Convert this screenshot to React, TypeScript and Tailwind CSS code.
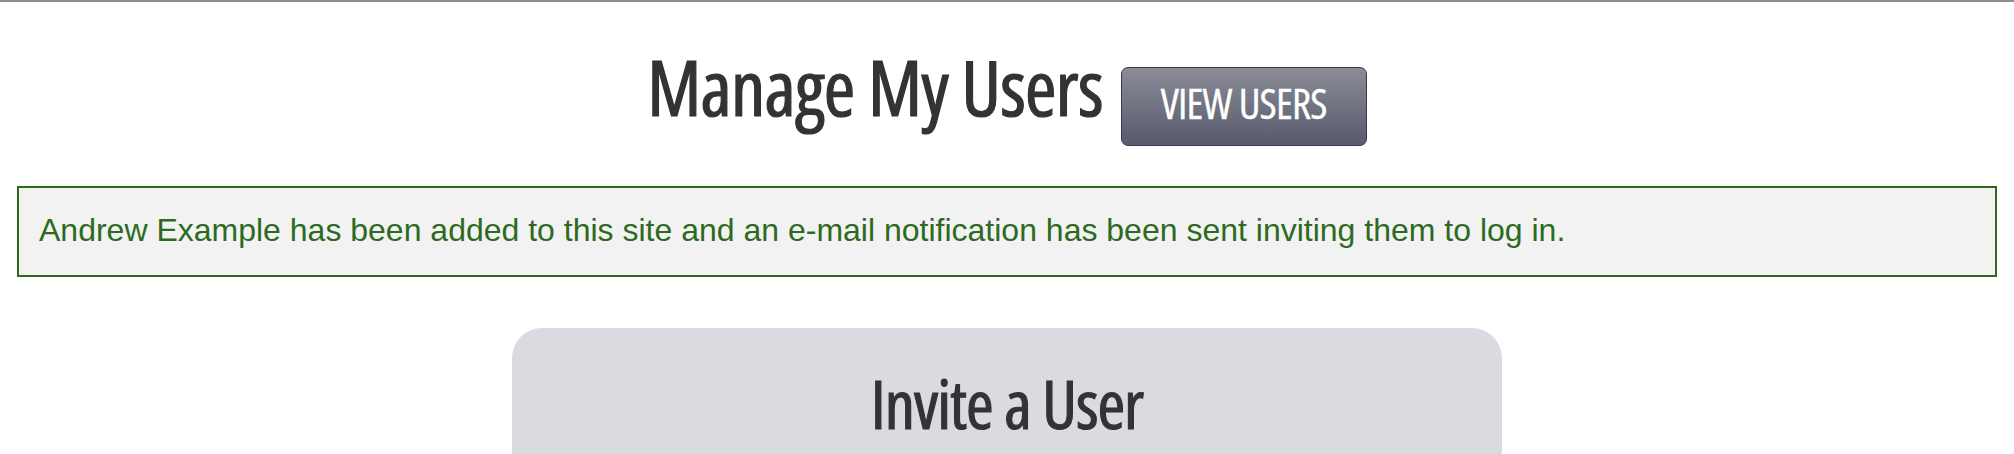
export default function App() {
  return (
    <div className="min-h-screen bg-white border-t-2 border-[#8d8e95] font-['Liberation_Sans',Arial,sans-serif]">
      <div className="flex justify-center items-start gap-[18px] pt-[47px]">
        <h1 className="font-['Open_Sans',sans-serif] [font-stretch:75%] font-normal text-[76px] tracking-[-0.7px] leading-none text-[#333333] [-webkit-text-stroke:1.2px_#333333]">
          Manage My Users
        </h1>
        <button
          type="button"
          className="mt-[18px] h-[79px] w-[246px] justify-center pt-[14px] rounded-[7px] border border-[#373a4f] bg-gradient-to-b from-[#8b8c96] to-[#585a6d] text-white font-['Open_Sans',sans-serif] [font-stretch:75%] font-normal text-[42px] tracking-[-0.8px] leading-none flex items-start [-webkit-text-stroke:0.3px_#ffffff]"
        >
          VIEW USERS
        </button>
      </div>

      <div className="mx-[17px] mt-[40px] border-2 border-[#2d6a1f] bg-[#f2f2f2] pl-[20px] pt-[26px] pb-[29px] text-[32px] leading-none text-[#2d6a1f]">
        Andrew Example has been added to this site and an e-mail notification has been sent inviting them to log in.
      </div>

      <div className="mx-auto mt-[51px] w-[990px] rounded-t-[30px] bg-[#dadbe0] pt-[42px] pb-[60px]">
        <h2 className="text-center font-['Open_Sans',sans-serif] [font-stretch:75%] font-normal text-[67px] tracking-[-1px] leading-none text-[#333333] [-webkit-text-stroke:1.1px_#333333]">
          Invite a User
        </h2>
      </div>
    </div>
  );
}
